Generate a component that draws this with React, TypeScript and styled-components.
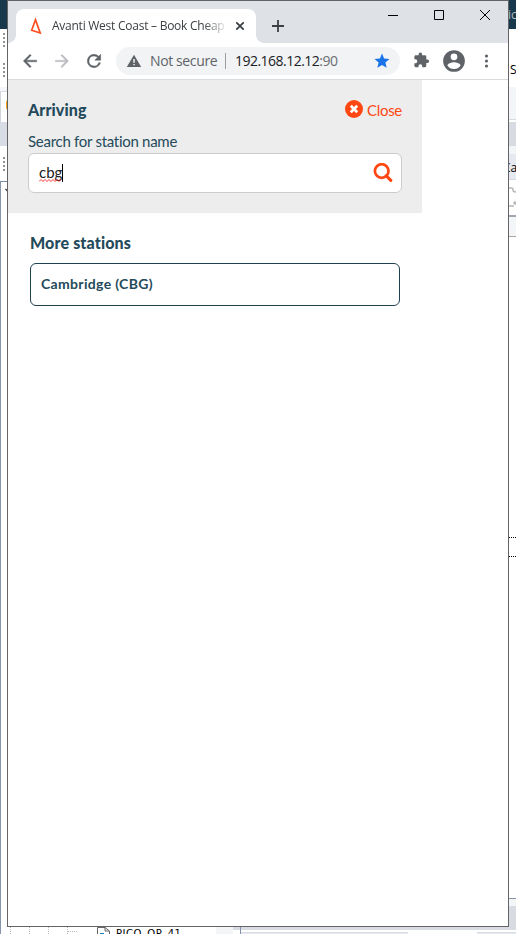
import React from "react";
import styled, { createGlobalStyle } from "styled-components";

const GlobalStyle = createGlobalStyle`
  * { box-sizing: border-box; }
  html, body { margin: 0; padding: 0; background: #fff; overflow: hidden; }
  svg { display: block; flex: none; }
`;

const ui = `"Open Sans", "Noto Sans", sans-serif`;
const brand = `Lato, "Open Sans", sans-serif`;

const Desktop = styled.div`
  display: grid;
  grid-template-columns: 7px 502px 7px;
  grid-template-rows: 927px 7px;
  width: 516px;
  height: 934px;
  overflow: hidden;
`;

const Strip = styled.div`
  display: flex;
  flex-direction: column;
  overflow: hidden;
  min-width: 0;
`;

const Band = styled.div<{ $h: number; $bg?: string; $line?: string; $side?: string }>`
  flex: none;
  height: ${(p) => p.$h}px;
  background: ${(p) => p.$bg ?? "#fff"};
  border-bottom: ${(p) => (p.$line ? `1px solid ${p.$line}` : "none")};
  border-left: ${(p) => (p.$side ? `1px solid ${p.$side}` : "none")};
  overflow: hidden;
`;

const Grip = styled.div<{ $top: number }>`
  width: 2px;
  height: 15px;
  margin: ${(p) => p.$top}px 0 0 3px;
  background: repeating-linear-gradient(#929292 0 2px, transparent 2px 4px);
`;

const Marker = styled.div`
  width: 1px;
  height: 8px;
  margin: 9px 0 0 5px;
  background: #f4a61c;
`;

const Dots = styled.div`
  flex: none;
  height: 1px;
  background: repeating-linear-gradient(90deg, #000 0 1px, #fff 1px 2px);
`;

const Peek = styled.div<{ $color: string; $shift: number; $lh: number }>`
  font: 12px/${(p) => p.$lh}px ${ui};
  color: ${(p) => p.$color};
  margin-left: ${(p) => p.$shift}px;
  white-space: nowrap;
`;

const Window = styled.div`
  display: flex;
  flex-direction: column;
  border: 1px solid #646467;
  background: #fff;
  overflow: hidden;
`;

const TabStrip = styled.div`
  flex: none;
  display: flex;
  align-items: flex-start;
  height: 42px;
  background: #dee1e6;
`;

const TabCorner = styled.div<{ $side: "left" | "right" }>`
  width: 8px;
  height: 8px;
  margin-top: 34px;
  background: radial-gradient(
    circle at ${(p) => (p.$side === "left" ? "0 0" : "100% 0")},
    #dee1e6 7.5px,
    #fff 8.3px
  );
`;

const Tab = styled.div`
  display: flex;
  align-items: center;
  width: 240px;
  height: 34px;
  margin-top: 8px;
  padding-left: 12px;
  border-radius: 8px 8px 0 0;
  background: #fff;
`;

const TabTitle = styled.div`
  flex: none;
  width: 173px;
  margin: 0 8px;
  white-space: nowrap;
  font: 12px/20px ${ui};
  letter-spacing: -0.25px;
  color: #3c4043;
  mask-image: linear-gradient(90deg, #000 152px, transparent 176px);
`;

const NewTab = styled.div`
  margin: 19px 0 0 8px;
`;

const Caption = styled.div`
  display: flex;
  align-items: center;
  gap: 35px;
  margin: 8px 0 0 103px;
`;

const Toolbar = styled.div`
  flex: none;
  display: flex;
  align-items: center;
  height: 37px;
  padding-left: 12px;
  border-bottom: 1px solid #dadbdc;
`;

const NavIcons = styled.div`
  display: flex;
  gap: 12px;
`;

const Omnibox = styled.div`
  flex: none;
  display: flex;
  align-items: center;
  width: 284px;
  height: 28px;
  margin-left: 12px;
  padding-left: 10px;
  border-radius: 14px;
  background: #f1f3f4;
  font: 14px/28px ${ui};
`;

const Secure = styled.span`
  flex: none;
  width: 68px;
  margin-left: 8px;
  white-space: nowrap;
  letter-spacing: -0.38px;
  color: #5f6368;
`;

const Divider = styled.span`
  width: 1px;
  height: 16px;
  margin: 0 9px 0 7px;
  background: #9a9ea3;
`;

const Address = styled.span`
  flex: none;
  width: 138px;
  white-space: nowrap;
  letter-spacing: -0.52px;
  color: #202124;
  span { color: #6a6e73; }
`;

const SearchPanel = styled.section`
  flex: none;
  width: 414px;
  height: 133px;
  padding: 20px 20px 0;
  background: #ededed;
  font-family: ${brand};
  color: #244a5b;
`;

const PanelHead = styled.div`
  display: flex;
  justify-content: space-between;
  height: 22px;
`;

const Heading = styled.h2<{ $ls: number; $up?: number }>`
  margin: ${(p) => -(p.$up ?? 0)}px 0 0;
  font: 900 16px/22px ${brand};
  letter-spacing: ${(p) => p.$ls}px;
  color: #244a5b;
  white-space: nowrap;
`;

const CloseButton = styled.button`
  display: flex;
  align-items: flex-start;
  gap: 4px;
  width: 57px;
  padding: 0;
  border: 0;
  background: none;
  color: #ff4713;
  font: 15px/20px ${brand};
  letter-spacing: -0.3px;
  white-space: nowrap;
`;

const FieldLabel = styled.label`
  display: block;
  margin-top: 8px;
  padding-bottom: 1px;
  font-size: 15px;
  line-height: 22px;
  letter-spacing: -0.28px;
`;

const Field = styled.div`
  display: flex;
  align-items: center;
  justify-content: space-between;
  height: 40px;
  padding: 0 8px 0 10px;
  border: 1px solid #ccc;
  border-radius: 6px;
  background: #fff;
`;

const Typed = styled.div`
  display: flex;
  align-items: center;
  font: 15px/20px ${brand};
  color: #222;
`;

const Misspelt = styled.span`
  display: grid;
  margin-top: -2px;
  svg, span { grid-area: 1 / 1; }
  svg { align-self: end; }
`;

const Caret = styled.span`
  width: 1px;
  height: 18px;
  background: #000;
`;

const Results = styled.section`
  padding: 19px 22px;
`;

const Station = styled.div`
  width: 370px;
  height: 43px;
  margin-top: 9px;
  padding-left: 10px;
  border: 1px solid #1f4152;
  border-radius: 6px;
  font: 700 14px/39px ${brand};
  letter-spacing: 0.33px;
  color: #244a5b;
`;

const Footer = styled.div`
  grid-column: 1 / -1;
  display: flex;
  overflow: hidden;
`;

const Tree = styled.div`
  flex: none;
  display: flex;
  width: 233px;
  height: 7px;
  border-left: 1px solid #8794ad;
  overflow: hidden;
`;

const TreeGuide = styled.i<{ $gap: number }>`
  flex: none;
  width: 1px;
  height: 7px;
  margin-left: ${(p) => p.$gap}px;
  background: repeating-linear-gradient(#bbb 0 1px, #fff 1px 2px);
`;

const TreeBranch = styled.i`
  flex: none;
  width: 9px;
  height: 1px;
  margin-top: 4px;
  background: repeating-linear-gradient(90deg, #bbb 0 1px, #fff 1px 2px);
`;

const FileName = styled.span`
  flex: none;
  width: 100px;
  margin-left: 6px;
  font: 10px/13px "DejaVu Sans", sans-serif;
  letter-spacing: 0.5px;
  color: #000;
  white-space: nowrap;
`;

const TreeScroll = styled.div`
  flex: none;
  width: 18px;
  height: 7px;
  background: #f4f5f7;
`;

const Pane = styled.div<{ $w: number; $left?: boolean }>`
  flex: none;
  width: ${(p) => p.$w}px;
  height: 7px;
  border-left: ${(p) => (p.$left ? "1px solid #8493ab" : "none")};
  background: linear-gradient(#d8dce2 0 3px, #fff 3px 5px, #d8dce2 5px 6px, #e6eaf0 6px);
`;

const Gap = styled.div<{ $w: number }>`
  flex: none;
  width: ${(p) => p.$w}px;
  height: 7px;
  background: linear-gradient(#d8dce2 0 3px, #fff 3px);
`;

export default function App() {
  return (
    <>
      <GlobalStyle />
      <Desktop>
        <Strip>
          <Band $h={29} $bg="#17394b" />
          <Band $h={58}>
            <Grip $top={4} />
            <Grip $top={15} />
          </Band>
          <Band $h={5} $bg="#f4f6f9" $line="#d7dbe2" />
          <Band $h={30} $side="#cfd4dd">
            <Marker />
          </Band>
          <Band $h={24} $bg="#d8dce5" />
          <Band $h={35}>
            <Grip $top={11} />
          </Band>
          <Band $h={1} $bg="#7b8aa7" />
          <Band $h={745} $side="#8794ad">
            <svg width="6" height="12" viewBox="0 0 6 12">
              <path d="M4.500 7 7 9.500" stroke="#444" strokeWidth="1.500" />
            </svg>
          </Band>
        </Strip>

        <Window>
          <TabStrip>
            <TabCorner $side="left" />
            <Tab>
              <svg width="16" height="18" viewBox="0 0 16 18">
                <path d="M7.500 2.800 3.700 13.200 12.200 16Z" fill="none" stroke="#ff4d20" strokeWidth="1.700" />
              </svg>
              <TabTitle>Avanti West Coast – Book Cheap</TabTitle>
              <svg width="14" height="14" viewBox="0 0 14 14">
                <path d="M3.3 3.3 10.7 10.7 M10.7 3.3 3.3 10.7" stroke="#3c4043" strokeWidth="1.8" />
              </svg>
            </Tab>
            <TabCorner $side="right" />
            <NewTab>
              <svg width="12" height="12" viewBox="0 0 12 12">
                <path d="M6 0V12M0 6H12" stroke="#3c4043" strokeWidth="1.800" />
              </svg>
            </NewTab>
            <Caption>
              <svg width="12" height="12" viewBox="0 0 12 12">
                <path d="M1 6.500H11" stroke="#000" />
              </svg>
              <svg width="11" height="12" viewBox="0 0 11 12">
                <path d="M.5 1.500H9.500V10.500H.5Z" fill="none" stroke="#000" />
              </svg>
              <svg width="12" height="12" viewBox="1 0 12 12">
                <path d="M1 1 11 11 M11 1 1 11" stroke="#000" />
              </svg>
            </Caption>
          </TabStrip>

          <Toolbar>
            <NavIcons>
              <svg width="20" height="20" viewBox="0 0 24 24" fill="#5f6368">
                <path d="M20 11H7.83l5.59-5.59L12 4l-8 8 8 8 1.41-1.41L7.83 13H20z" stroke="#5f6368" strokeWidth=".5" />
              </svg>
              <svg width="20" height="20" viewBox="0 0 24 24" fill="#bbbdc0">
                <path d="M12 4l-1.41 1.41L16.17 11H4v2h12.17l-5.58 5.59L12 20l8-8z" stroke="#bbbdc0" strokeWidth=".4" />
              </svg>
              <svg width="20" height="20" viewBox="0 0 24 24" fill="#5f6368">
                <path d="M17.65 6.35A7.96 7.96 0 0 0 12 4a8 8 0 1 0 7.73 10h-2.08A6 6 0 1 1 12 6c1.66 0 3.14.69 4.22 1.78L13 11h7V4z" stroke="#5f6368" strokeWidth=".6" />
              </svg>
            </NavIcons>
            <Omnibox>
              <svg width="16" height="16" viewBox="0 0 16 16">
                <path d="M8 1.800 15.200 14H.8Z M7.300 6V9.700H8.800V6Z M7.300 10.900V12.300H8.800V10.900Z" fill="#5f6368" fillRule="evenodd" />
              </svg>
              <Secure>Not secure</Secure>
              <Divider />
              <Address>192.168.12.12<span>:90</span></Address>
              <svg width="18" height="18" viewBox="0 0 24 24" fill="#1a73e8">
                <path d="M12 17.27 18.18 21l-1.64-7.03L22 9.24l-7.19-.61L12 2 9.19 8.63 2 9.24l5.46 4.73L5.82 21z" />
              </svg>
            </Omnibox>
            <svg width="41" height="18" viewBox="-13 0 41 18">
              <path transform="translate(0 -.2) scale(.7)" d="M20.500 11H19V7c0-1.100-.9-2-2-2h-4V3.500a2.500 2.500 0 0 0-5 0V5H4c-1.100 0-2 .9-2 2v3.800h1.500a2.700 2.700 0 0 1 0 5.400H2V20c0 1.100.9 2 2 2h3.800v-1.500a2.700 2.700 0 0 1 5.400 0V22H17c1.100 0 2-.9 2-2v-4h1.500a2.500 2.500 0 0 0 0-5z" fill="#5f6368" />
            </svg>
            <svg width="26" height="26" viewBox="3.500 3.500 17 17">
              <path d="M12 4.900a7.100 7.100 0 1 0 0 14.200 7.100 7.100 0 0 0 0-14.200zm0 2.200a2.200 2.200 0 1 1 0 4.400 2.200 2.200 0 0 1 0-4.400zm0 10.200a5.200 5.200 0 0 1-4.300-2.300c0-1.400 2.900-2.200 4.300-2.200s4.300.8 4.300 2.200a5.200 5.200 0 0 1-4.300 2.300z" fill="#5f6368" />
            </svg>
            <svg width="40" height="16" viewBox="0 0 40 16" fill="#5f6368">
              <circle cx="19.500" cy="3" r="1.600" />
              <circle cx="19.500" cy="8" r="1.600" />
              <circle cx="19.500" cy="13" r="1.600" />
            </svg>
          </Toolbar>

          <SearchPanel>
            <PanelHead>
              <Heading $ls={0.1} $up={1}>Arriving</Heading>
              <CloseButton>
                <svg width="18" height="18" viewBox="0 0 18 18">
                  <circle cx="9" cy="9" r="9" fill="#ff4713" />
                  <path d="M5.800 5.800 12.200 12.200 M12.200 5.800 5.800 12.200" stroke="#fff" strokeWidth="2.700" />
                </svg>
                Close
              </CloseButton>
            </PanelHead>
            <FieldLabel>Search for station name</FieldLabel>
            <Field>
              <Typed>
                <Misspelt>
                  <span>cbg</span>
                  <svg width="23" height="3" viewBox="0 0 23 3" fill="none" stroke="#f22">
                    <path d="M0 2.500 2 .5 4 2.500 6 .5 8 2.500 10 .5 12 2.500 14 .5 16 2.500 18 .5 20 2.500 22 .5" strokeWidth=".9" />
                  </svg>
                </Misspelt>
                <Caret />
              </Typed>
              <svg width="20" height="20" viewBox="0 0 20 20" fill="none" stroke="#ff4713">
                <circle cx="8.700" cy="8" r="6.800" strokeWidth="2.700" />
                <path d="M13.300 12.800 17.800 17.300" strokeWidth="3.200" strokeLinecap="round" />
              </svg>
            </Field>
          </SearchPanel>

          <Results>
            <Heading $ls={0.14}>More stations</Heading>
            <Station>Cambridge (CBG)</Station>
          </Results>
        </Window>

        <Strip>
          <Band $h={29} $bg="#17394b">
            <Peek $color="#b4bdc4" $shift={-1} $lh={29}>ic</Peek>
          </Band>
          <Band $h={58}>
            <Peek $color="#000" $shift={1} $lh={81}>S</Peek>
          </Band>
          <Band $h={33} $bg="#f4f5f7" $line="#d8dce2" />
          <Band $h={2} />
          <Band $h={24} $bg="#d8dce2" />
          <Band $h={8} $bg="#f4f5f7" />
          <Band $h={26} $bg="#e6eaf0" $line="#d5d9df">
            <Peek $color="#000" $shift={-6} $lh={27}>Ca</Peek>
          </Band>
          <Band $h={35}>
            <svg width="7" height="35" viewBox="0 0 7 35" fill="none" stroke="#b5b5b5" strokeWidth="1.500">
              <path d="M0 8H3Q4 8 4 10T7 12M0 26H5" />
              <circle cx="6" cy="23" r="1" />
            </svg>
          </Band>
          <Band $h={2} $bg="#a2a6b2" />
          <Band $h={20} $bg="#f4f5f7" $line="#a7a7ab" />
          <Band $h={300} />
          <Dots />
          <Band $h={18} />
          <Dots />
          <Band $h={341} />
          <Band $h={1} $bg="#8493ab" />
          <Band $h={7} $bg="#f4f5f7" />
          <Band $h={21} $bg="#d8dce2" />
        </Strip>

        <Footer>
          <Tree>
            <TreeGuide $gap={9} />
            <TreeGuide $gap={18} />
            <TreeGuide $gap={18} />
            <TreeGuide $gap={18} />
            <TreeBranch />
            <svg width="33" height="7" viewBox="-20 0 33 7">
              <path d="M.5 7V.5H8L12.500 4V7M8 0V4H12" fill="none" stroke="#666" />
              <path d="M3 6.500H7" stroke="#1686b8" />
            </svg>
            <FileName>PICO_OP_41</FileName>
            <TreeScroll />
          </Tree>
          <Gap $w={7} />
          <Pane $w={168} $left />
          <Gap $w={69} />
          <Pane $w={39} />
        </Footer>
      </Desktop>
    </>
  );
}
